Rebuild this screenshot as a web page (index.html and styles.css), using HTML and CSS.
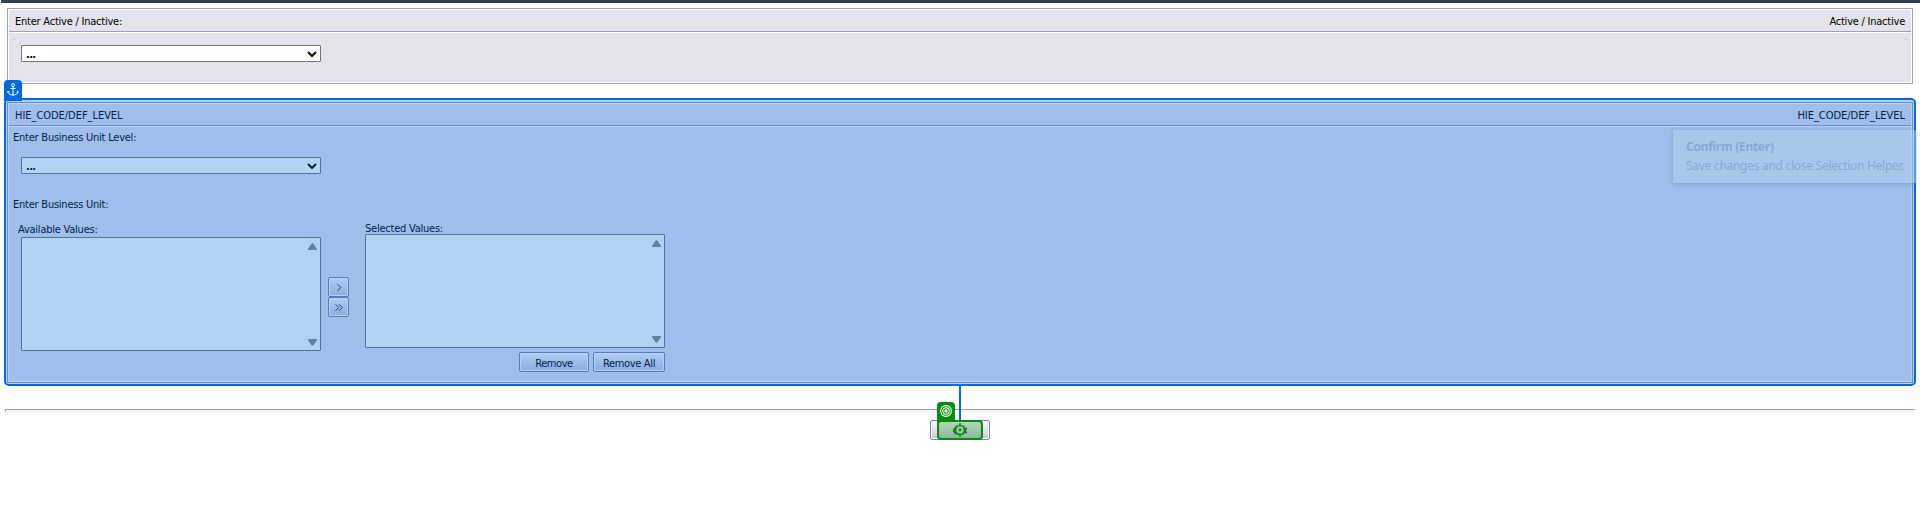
FILE: index.html
```html
<!DOCTYPE html>
<html lang="en">
<head>
<meta charset="utf-8">
<title>Prompts</title>
<link rel="stylesheet" href="styles.css">
</head>
<body>
<div class="topbar"></div>
<section class="panel panel-active">
  <header class="panel-head"><span class="t">Enter Active / Inactive:</span><span class="t">Active / Inactive</span></header>
  <div class="panel-body">
    <div class="select"><span class="dots">...</span><svg class="chev" viewBox="0 0 10 6"><path d="M1 1l4 4 4-4"/></svg></div>
  </div>
</section>
<div class="highlight">
  <section class="panel panel-unit">
    <header class="panel-head"><span class="t code">HIE_CODE/DEF_LEVEL</span><span class="t code">HIE_CODE/DEF_LEVEL</span></header>
    <div class="panel-body">
      <div class="t label">Enter Business Unit Level:</div>
      <div class="select"><span class="dots">...</span><svg class="chev" viewBox="0 0 10 6"><path d="M1 1l4 4 4-4"/></svg></div>
      <div class="t label label-unit">Enter Business Unit:</div>
      <div class="picker">
        <div class="available">
          <div class="t caption">Available Values:</div>
          <div class="list"><svg class="arrow" viewBox="0 0 9 7"><path d="M0 7V6L3.2 1Q4.5-.6 5.8 1L9 6V7z"/></svg><svg class="arrow" viewBox="0 0 9 7"><path d="M0 0V1L3.2 6Q4.5 7.6 5.8 6L9 1V0z"/></svg></div>
        </div>
        <div class="moves">
          <div class="btn move"><svg viewBox="0 0 8 7"><path d="M2.5 .2l3.3 3.3-3.3 3.3"/></svg></div>
          <div class="btn move"><svg viewBox="0 0 8 7"><path d="M.5 .2l3.3 3.3-3.3 3.3M4 .2l3.3 3.3L4 6.8"/></svg></div>
        </div>
        <div class="selected">
          <div class="t caption">Selected Values:</div>
          <div class="list"><svg class="arrow" viewBox="0 0 9 7"><path d="M0 7V6L3.2 1Q4.5-.6 5.8 1L9 6V7z"/></svg><svg class="arrow" viewBox="0 0 9 7"><path d="M0 0V1L3.2 6Q4.5 7.6 5.8 6L9 1V0z"/></svg></div>
          <div class="actions"><div class="btn remove t">Remove</div><div class="btn remove-all t">Remove All</div></div>
        </div>
      </div>
    </div>
  </section>
  <div class="veil"></div>
  <div class="tip"><b>Confirm (Enter)</b><span>Save changes and close Selection Helper.</span></div>
  <div class="anchor"><svg viewBox="0 0 12 14"><circle cx="6" cy="2.2" r="1.5"/><path d="M6 3.7v8.5M3.5 5.5h5M1.2 8.3v1Q2 12.2 6 12.2T10.8 9.3v-1M.2 9.7l1-1.5 1.3 1M9.5 9.2l1.3-1 1 1.5"/></svg></div>
</div>
<div class="rule"></div>
<div class="target-row">
  <div class="btn target-btn"><svg class="glyph" viewBox="0 0 14 9"><path d="M3 1L0 4.500 3 8M10.500 1.500l3 6M13.500 1.500l-3 6"/></svg></div>
  <div class="target"><svg viewBox="0 0 16 16"><circle cx="8" cy="8" r="4.500"/><path d="M8 1v3M8 12v3M1.500 8h2M12.500 8h2M3.900 3.900l1 1M12.100 3.900l-1 1M3.900 12.100l1-1M12.100 12.100l-1-1"/><circle class="dot" cx="8" cy="8" r="1.400"/></svg></div>
  <div class="link"></div>
  <div class="badge"><svg viewBox="0 0 12 12"><circle cx="6" cy="6" r="5.400"/><circle cx="6" cy="6" r="3.200"/><circle cx="6" cy="6" r="1.100"/></svg></div>
</div>
</body>
</html>
```

FILE: styles.css
```css
* { box-sizing: border-box; }
body { margin: 0; background: #fff; color: #000; font: 11px/13px "DejaVu Sans Condensed", "DejaVu Sans", sans-serif; height: 519px; overflow: hidden; }
svg { display: block; fill: none; }
.t { letter-spacing: -.23px; white-space: nowrap; }
.topbar { height: 3px; margin-left: 1px; background: #373e4e; }

.panel { border: 1px solid #a09fb8; background: #fff; display: flex; flex-direction: column; }
.panel-active { margin: 5px 7px 0; height: 76px; }
.panel-head { flex: none; margin: 1px 1px 0; height: 22px; padding: 2px 6px 0; display: flex; align-items: center; justify-content: space-between; background: #e4e3ec; border-bottom: 1px solid #a09fb8; }
.panel-body { flex: 1; margin: 1px; background: #e4e3ec; }
.panel-active .panel-body { padding: 12px; }
.code { letter-spacing: -.04px; }

.select { width: 300px; height: 17px; border: 1px solid #767676; border-radius: 1px; background: #fff; display: flex; align-items: center; justify-content: space-between; padding: 0 3px 0 4px; }
.chev { width: 10px; height: 6px; stroke: #000; stroke-width: 2; }
.dots { font-weight: bold; letter-spacing: -.6px; padding-top: 2px; }

.highlight { position: relative; margin: 14px 4px 0; height: 288px; border: 2px solid #0069e1; border-radius: 5px; padding: 2px 1px 1px; }
.panel-unit { height: 281px; }
.panel-unit .panel-body { padding: 3px 12px; }
.label { margin: 1px 0 0 -8px; }
.panel-unit .select { margin-top: 13px; }
.label-unit { margin-top: 24px; }
.picker { display: flex; margin-top: 10px; }
.caption { height: 13px; line-height: 15px; }
.available { width: 300px; padding-top: 1px; }
.available .caption { margin-left: -3px; }
.list { width: 300px; height: 114px; border: 1px solid #767676; border-radius: 1px; background: linear-gradient(to right, #fff 283px, #fcfcfc 283px); display: flex; flex-direction: column; justify-content: space-between; align-items: flex-end; padding: 5px 3px 4px; }
.available .list { margin-top: 2px; }
.arrow { width: 9px; height: 7px; fill: #8b8b8b; }
.moves { width: 21px; margin: 56px 0 0 7px; }
.selected { width: 300px; margin-left: 16px; }
.actions { display: flex; justify-content: flex-end; gap: 4px; margin-top: 4px; }
.btn { height: 20px; border: 1px solid #8281aa; border-radius: 2px; box-shadow: inset 0 0 0 1px #fff; background: linear-gradient(#fafafc, #c9c8dc); display: flex; align-items: center; justify-content: center; }
.move svg { width: 8px; height: 7px; stroke: #333365; stroke-width: 1; }
.remove { width: 70px; padding-top: 3px; letter-spacing: -.42px; }
.remove-all { width: 72px; padding-top: 3px; letter-spacing: -.33px; }
.veil { position: absolute; inset: 0; border-radius: 3px; background: rgba(0, 105, 225, .3); }

.tip { position: absolute; left: 1667px; top: 30px; width: 243px; height: 53px; padding: 7px 13px; background: rgba(179, 210, 240, .45); box-shadow: 0 1px 4px rgba(50, 90, 150, .3); color: rgba(100, 137, 188, .5); font: 12px/19px "Noto Sans", sans-serif; letter-spacing: -.28px; white-space: nowrap; display: flex; flex-direction: column; }
.anchor { position: absolute; left: -2px; top: -20px; width: 18px; height: 21px; border-radius: 4px 4px 0 0; background: #0069e1; padding: 3px 0 0 3px; }
.anchor svg { width: 12px; height: 14px; stroke: #fff; stroke-width: 1; }

.rule { height: 3px; margin: 23px 5px 0; border: solid; border-width: 1px; border-color: #9a9a9a #eee #eee #9a9a9a; }
.target-row { position: relative; width: 60px; margin: 8px 0 0 930px; }
.target-btn { width: 60px; }
.glyph { width: 14px; height: 9px; stroke: #333365; stroke-width: 1.3; }
.target { position: absolute; left: 7px; top: 0; width: 46px; height: 20px; border: 2px solid #058b0d; border-radius: 4px; background: rgba(5, 139, 13, .3); display: flex; align-items: center; justify-content: center; }
.target svg { width: 16px; height: 16px; stroke: #058b0d; stroke-width: 1.5; }
.target .dot { fill: #058b0d; stroke: none; }
.link { position: absolute; left: 29px; top: -34px; width: 2px; height: 35px; background: #0069e1; }
.badge { position: absolute; left: 7px; top: -18px; width: 18px; height: 20px; border-radius: 4px 4px 0 0; background: #058b0d; padding: 3px; }
.badge svg { width: 12px; height: 12px; stroke: #fff; stroke-width: 1.1; }
```
